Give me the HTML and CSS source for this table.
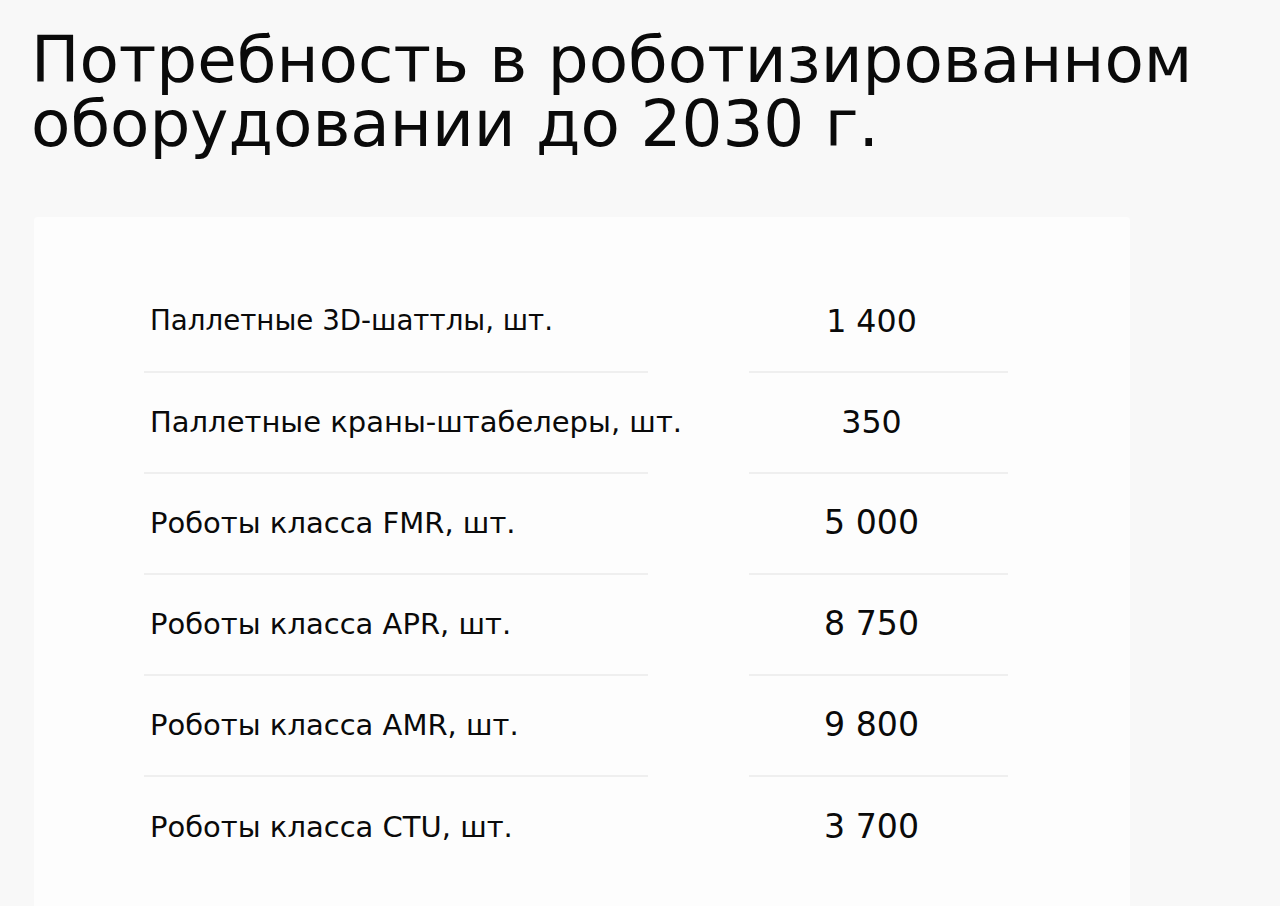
FILE: index.html
```html
<!DOCTYPE html>
<html lang="ru">
<head>
<meta charset="utf-8">
<title>Потребность в роботизированном оборудовании до 2030 г.</title>
<link rel="stylesheet" href="styles.css">
</head>
<body>
<main class="page">
  <h1 class="title">Потребность в роботизированном оборудовании до 2030 г.</h1>
  <section class="card">
    <div class="table">
      <div class="row"><div class="label label-small">Паллетные 3D-шаттлы, шт.</div><div class="value value-small">1 400</div></div>
      <div class="row"><div class="label">Паллетные краны-штабелеры, шт.</div><div class="value value-small">350</div></div>
      <div class="row"><div class="label">Роботы класса FMR, шт.</div><div class="value">5 000</div></div>
      <div class="row"><div class="label">Роботы класса APR, шт.</div><div class="value">8 750</div></div>
      <div class="row"><div class="label">Роботы класса AMR, шт.</div><div class="value">9 800</div></div>
      <div class="row"><div class="label">Роботы класса CTU, шт.</div><div class="value">3 700</div></div>
    </div>
  </section>
</main>
</body>
</html>
```

FILE: styles.css
```css
html, body {
  margin: 0;
  padding: 0;
  background: #f8f8f8;
  height: 100%;
  overflow: hidden;
}

.page {
  font-family: "DejaVu Sans", "Noto Sans", sans-serif;
  color: #0a0a0a;
}

.title {
  margin: 0;
  padding: 28px 0 0 31px;
  font-size: 64.4px;
  font-weight: normal;
  line-height: 64px;
  width: 1220px;
}

.card {
  margin: 61px 0 0 34px;
  width: 1096px;
  height: 700px;
  background: #fdfdfd;
  border-radius: 4px;
  padding-top: 55px;
  box-sizing: border-box;
}

.table {
  display: flex;
  flex-direction: column;
  padding-left: 110px;
}

.row {
  display: grid;
  grid-template-columns: 504px 259px;
  column-gap: 101px;
  height: 101px;
}

.label, .value {
  display: flex;
  align-items: center;
  white-space: nowrap;
  padding-bottom: 2px;
  border-bottom: 2px solid #efefef;
}

.row:last-child .label,
.row:last-child .value {
  border-bottom: none;
}

.label {
  padding-left: 6px;
  font-size: 29px;
}

.value {
  justify-content: center;
  padding-right: 14px;
  font-size: 33.2px;
}

.label-small {
  font-size: 27.7px;
}

.value-small {
  font-size: 31.7px;
}
```
